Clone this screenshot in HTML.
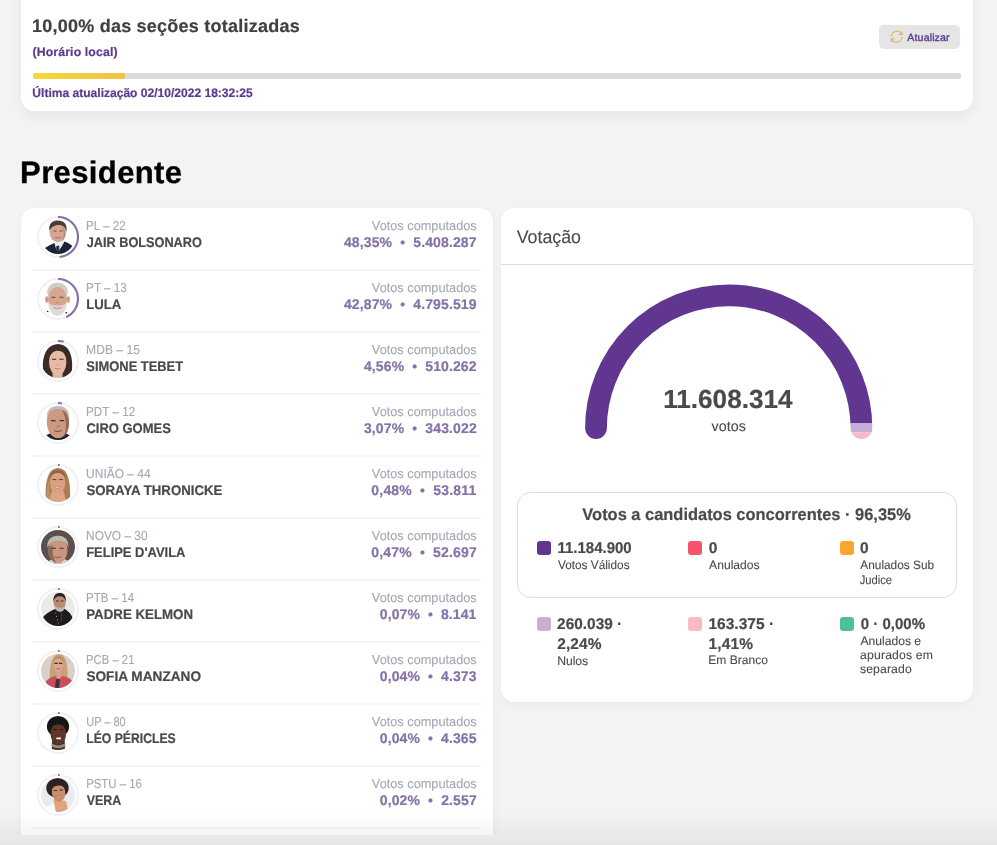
<!DOCTYPE html>
<html lang="pt-BR">
<head>
<meta charset="utf-8">
<title>Resultados - Presidente</title>
<style>
html,body{margin:0;padding:0}
body{width:997px;height:845px;overflow:hidden;background:#f3f3f3;font-family:"Liberation Sans",sans-serif;position:relative;color:#464646}
#wrap{position:absolute;left:0;top:0;width:997px;height:845px;will-change:transform}
.card{position:absolute;background:#fff;border-radius:14px;box-shadow:0 4px 11px rgba(0,0,0,.04)}
.t{position:absolute;left:0;top:0;white-space:nowrap;line-height:1;margin:0;font-weight:normal;transform-origin:0 0;text-rendering:geometricPrecision;-webkit-text-stroke-width:.1px}
.b{font-weight:bold;-webkit-text-stroke-width:.2px}
.pur{color:#5a3a8e}
.g{color:#a3a8b4}
.d{color:#4a4a4a}
.lp{color:#8472a8}
#top{left:21px;top:-30px;width:952px;height:140.7px;box-shadow:0 6px 14px rgba(0,0,0,.05)}
#bar{position:absolute;left:33px;top:73px;width:928px;height:5.8px;border-radius:2px;background:#dadada;overflow:hidden}
#bar i{display:block;width:92px;height:6px;border-radius:2px;background:linear-gradient(90deg,#f6d83a,#efc245)}
#btn{position:absolute;left:879px;top:25px;width:81px;height:23.5px;border-radius:5px;background:#e5e5e5}
#ico{position:absolute;left:890.2px;top:30.1px}
#list{left:21px;top:208px;width:472px;height:627px;border-radius:14px 14px 0 0;overflow:hidden}
.sep{position:absolute;left:33px;width:448px;height:2px;background:#f3f3f3}
.av{position:absolute;left:37.15px}
#vot{left:501.3px;top:208px;width:472px;height:493.6px}
#vs{position:absolute;left:501.3px;top:264px;width:472px;height:1px;background:#dedede}
#gauge{position:absolute;left:570px;top:270px}
#box{position:absolute;left:517px;top:492px;width:438px;height:104px;border:1px solid #dcdcdc;border-radius:14px;background:#fff}
.sq{position:absolute;width:14px;height:14px;border-radius:3px}
#fade{position:absolute;left:0;top:812px;width:997px;height:23px;background:linear-gradient(180deg,rgba(0,0,0,0),rgba(0,0,0,.04))}
#foot{position:absolute;left:0;top:835px;width:997px;height:10px;background:linear-gradient(180deg,#ebebeb,#e4e4e4)}
</style>
</head>
<body>
<div id="wrap">
<div class="card" id="top"></div>
<div id="h1" class="t b" style="font-size:18px;letter-spacing:0.238px;transform:translate(31.93px,16.86px);color:#404040">10,00% das seções totalizadas</div>
<div id="hl" class="t b pur" style="font-size:12.3px;letter-spacing:0.124px;transform:translate(32.46px,46.19px);">(Horário local)</div>
<div id="bar"><i></i></div>
<div id="ua" class="t b pur" style="font-size:12.3px;transform:translate(32.34px,86.59px) scaleX(0.9798);">Última atualização 02/10/2022 18:32:25</div>
<div id="btn"></div>
<svg id="ico" width="13.4" height="13.4" viewBox="0 0 13.4 13.4" fill="none" stroke="#e8a63a" stroke-width="1" stroke-linecap="round" stroke-linejoin="round"><path d="M1.15 6.1A5.6 5.6 0 0 1 11.7 4.2"/><path d="M12.25 7.3A5.6 5.6 0 0 1 1.7 9.2"/><path d="M12.1 1.7V4.5H9.3"/><path d="M1.3 11.7V8.9H4.1"/></svg>
<span id="bt" class="t pur" style="font-size:10.6px;letter-spacing:0.129px;transform:translate(907.34px,33.03px);-webkit-text-stroke:.35px #5a3a8e">Atualizar</span>
<h1 id="pres" class="t b" style="font-size:31.1px;letter-spacing:0.337px;transform:translate(20.06px,156.77px);color:#000;-webkit-text-stroke:.3px #000">Presidente</h1>
<div class="card" id="list"></div>
<svg class="av" style="top:215.85px" width="42" height="42" viewBox="0 0 42 42"><circle cx="21" cy="21" r="20.0" fill="#fff" stroke="#f1f0f4" stroke-width="2"/><circle cx="21" cy="21" r="20.0" fill="none" stroke="#8572aa" stroke-width="2.1" stroke-dasharray="60.76 125.66" transform="rotate(-90 21 21)"/><clipPath id="cp0"><circle cx="21" cy="21" r="17"/></clipPath><filter id="bl0" x="-10%" y="-10%" width="120%" height="120%"><feGaussianBlur stdDeviation=".45"/></filter><g clip-path="url(#cp0)"><rect width="42" height="42" fill="#ffffff"/><g filter="url(#bl0)"><path d="M17 27L23 24.5L28 25.5L21.5 39Z" fill="#e9edf4"/><path d="M19.3 30L22.2 29.6L22.8 39L18.8 39Z" fill="#23365d"/><path d="M6 33.5C9.5 30.5 14 28.6 17.5 27L20.3 38L27.6 25.4C31.5 27 35.2 29 36.8 31.6L38 42H5Z" fill="#1d2130"/><ellipse cx="20.8" cy="16" rx="8.3" ry="10.2" fill="#d6a594"/><path d="M24 9C29.5 12 30 22 24.5 26.2C27.5 21 27.5 14 24 9Z" fill="#a9796a" opacity=".55"/><path d="M12.4 14.5C11.3 6.5 16.5 4.1 21.5 4.4C27.2 4.7 30.8 8.6 29.4 16C28.8 12 27 9.8 24.2 9.2C20 8.3 15.5 9.2 12.4 14.5Z" fill="#4a3c37"/><path d="M16.5 15h3M22.5 15h3" stroke="#5a3d35" stroke-width=".9"/><path d="M17.8 21.3Q20.8 22.6 23.8 21.3" stroke="#9a5f55" stroke-width=".8" fill="none"/></g></g></svg>
<div id="p0" class="t g" style="font-size:13.0px;transform:translate(86.10px,219.00px) scaleX(0.8962);">PL – 22</div><div id="n0" class="t b d" style="font-size:13.9px;transform:translate(86.70px,236.23px) scaleX(0.9156);">JAIR BOLSONARO</div><div id="v0" class="t g" style="font-size:13.0px;transform:translate(371.83px,219.20px) scaleX(0.9808);">Votos computados</div><div id="c0" class="t b lp" style="font-size:14px;letter-spacing:0.126px;transform:translate(343.94px,234.95px);">48,35% &nbsp;•&nbsp; 5.408.287</div><div class="sep" style="top:268.7px"></div>
<svg class="av" style="top:277.85px" width="42" height="42" viewBox="0 0 42 42"><circle cx="21" cy="21" r="20.0" fill="#fff" stroke="#f1f0f4" stroke-width="2"/><circle cx="21" cy="21" r="20.0" fill="none" stroke="#8572aa" stroke-width="2.1" stroke-dasharray="53.87 125.66" transform="rotate(-90 21 21)"/><clipPath id="cp1"><circle cx="21" cy="21" r="17"/></clipPath><filter id="bl1" x="-10%" y="-10%" width="120%" height="120%"><feGaussianBlur stdDeviation=".45"/></filter><g clip-path="url(#cp1)"><rect width="42" height="42" fill="#ffffff"/><g filter="url(#bl1)"><ellipse cx="20.5" cy="13.6" rx="10.4" ry="9" fill="#cfcbc7"/><ellipse cx="9.9" cy="21.5" rx="1.7" ry="3.2" fill="#cf9b85"/><ellipse cx="31.2" cy="21.5" rx="1.7" ry="3.2" fill="#cf9b85"/><ellipse cx="20.5" cy="21.5" rx="9.4" ry="12.5" fill="#d7a68f"/><path d="M11.3 23.5C11.5 33 16 37.8 20.5 37.8C25 37.8 29.6 33 29.8 23.5C27.5 28 24.5 27.6 20.5 27.6C16.5 27.6 13.6 28 11.3 23.5Z" fill="#dedad7"/><path d="M16.8 29.6Q20.5 32.6 24.4 29.6Q20.5 30.6 16.8 29.6Z" fill="#fff" stroke="#9a6a5e" stroke-width=".5"/><path d="M14.5 19.3h4M22.5 19.3h4" stroke="#6b4a40" stroke-width="1"/><path d="M19 24.5Q20.5 25.6 22.2 24.5" stroke="#b57e6b" stroke-width=".8" fill="none"/><circle cx="10.6" cy="33.6" r=".9" fill="#23262b"/><circle cx="29.3" cy="34.8" r=".9" fill="#23262b"/></g></g></svg>
<div id="p1" class="t g" style="font-size:13.0px;transform:translate(86.09px,281.00px) scaleX(0.8991);">PT – 13</div><div id="n1" class="t b d" style="font-size:13.9px;transform:translate(86.25px,298.23px) scaleX(0.9473);">LULA</div><div id="v1" class="t g" style="font-size:13.0px;transform:translate(371.83px,281.20px) scaleX(0.9808);">Votos computados</div><div id="c1" class="t b lp" style="font-size:14px;letter-spacing:0.125px;transform:translate(343.94px,296.95px);">42,87% &nbsp;•&nbsp; 4.795.519</div><div class="sep" style="top:330.7px"></div>
<svg class="av" style="top:339.85px" width="42" height="42" viewBox="0 0 42 42"><circle cx="21" cy="21" r="20.0" fill="#fff" stroke="#f1f0f4" stroke-width="2"/><circle cx="21" cy="21" r="20.0" fill="none" stroke="#8572aa" stroke-width="2.1" stroke-dasharray="5.73 125.66" transform="rotate(-90 21 21)"/><clipPath id="cp2"><circle cx="21" cy="21" r="17"/></clipPath><filter id="bl2" x="-10%" y="-10%" width="120%" height="120%"><feGaussianBlur stdDeviation=".45"/></filter><g clip-path="url(#cp2)"><rect width="42" height="42" fill="#ffffff"/><g filter="url(#bl2)"><path d="M6.2 30C4.8 18 9 3.9 21 3.9C33 3.9 36.3 18 35 30C34.5 35 32.5 37.6 30 38H11C8.4 37.6 6.7 34.5 6.2 30Z" fill="#3a2b28"/><rect x="15.6" y="31" width="10" height="8" fill="#e2b4a0"/><ellipse cx="20.7" cy="22" rx="8.7" ry="13.3" fill="#e6baa6"/><path d="M11.8 19C11.5 9.5 17 7.3 21 7.6C26 7.2 30 10 29.7 19C28.4 13.6 25.2 10.8 21 10.8C17 10.8 13.4 13.4 11.8 19Z" fill="#3a2b28"/><path d="M15 19.3h4.2M22.4 19.3h4.2" stroke="#3b2622" stroke-width="1.1"/><path d="M18 28.4Q20.7 29.8 23.6 28.4" stroke="#c07a74" stroke-width="1" fill="none"/><path d="M19.6 24.6Q20.7 25.4 22 24.6" stroke="#c9927f" stroke-width=".7" fill="none"/></g></g></svg>
<div id="p2" class="t g" style="font-size:13.0px;transform:translate(86.12px,343.00px) scaleX(0.9295);">MDB – 15</div><div id="n2" class="t b d" style="font-size:13.9px;transform:translate(86.37px,360.23px) scaleX(0.9281);">SIMONE TEBET</div><div id="v2" class="t g" style="font-size:13.0px;transform:translate(371.83px,343.20px) scaleX(0.9808);">Votos computados</div><div id="c2" class="t b lp" style="font-size:14px;letter-spacing:0.114px;transform:translate(363.94px,358.95px);">4,56% &nbsp;•&nbsp; 510.262</div><div class="sep" style="top:392.7px"></div>
<svg class="av" style="top:401.85px" width="42" height="42" viewBox="0 0 42 42"><circle cx="21" cy="21" r="20.0" fill="#fff" stroke="#f1f0f4" stroke-width="2"/><circle cx="21" cy="21" r="20.0" fill="none" stroke="#8572aa" stroke-width="2.1" stroke-dasharray="3.86 125.66" transform="rotate(-90 21 21)"/><clipPath id="cp3"><circle cx="21" cy="21" r="17"/></clipPath><filter id="bl3" x="-10%" y="-10%" width="120%" height="120%"><feGaussianBlur stdDeviation=".45"/></filter><g clip-path="url(#cp3)"><rect width="42" height="42" fill="#ffffff"/><g filter="url(#bl3)"><path d="M8 42L9.2 33.2L15 30.6H27L33 33.6L34 42Z" fill="#1f222b"/><ellipse cx="21" cy="20" rx="11.2" ry="16.2" fill="#cc9983"/><path d="M25 8C34 11 34.5 29 26 36.2C30 28 30 16 25 8Z" fill="#7c4f42" opacity=".65"/><path d="M9.9 17C9 8 14 3.8 21 3.8C28 3.8 33 8 32.1 17C31.3 12.5 29.8 10 28 8.8C24 6.4 18 6.4 14 8.8C12.2 10 10.7 12.5 9.9 17Z" fill="#c3bdb8"/><path d="M14 18.6h4.6M22.6 18.6h4.6" stroke="#4a3029" stroke-width="1.1"/><path d="M17 28.8Q21 30.4 25 28.4" stroke="#7a4a40" stroke-width="1" fill="none"/><path d="M19.6 24Q21 25 22.8 24" stroke="#9a6656" stroke-width=".8" fill="none"/></g></g></svg>
<div id="p3" class="t g" style="font-size:13.0px;transform:translate(86.10px,405.00px) scaleX(0.8964);">PDT – 12</div><div id="n3" class="t b d" style="font-size:13.9px;transform:translate(86.43px,422.23px) scaleX(0.9342);">CIRO GOMES</div><div id="v3" class="t g" style="font-size:13.0px;transform:translate(371.83px,405.20px) scaleX(0.9808);">Votos computados</div><div id="c3" class="t b lp" style="font-size:14px;letter-spacing:0.124px;transform:translate(363.95px,420.95px);">3,07% &nbsp;•&nbsp; 343.022</div><div class="sep" style="top:454.7px"></div>
<svg class="av" style="top:463.85px" width="42" height="42" viewBox="0 0 42 42"><circle cx="21" cy="21" r="20.0" fill="#fff" stroke="#f1f0f4" stroke-width="2"/><circle cx="21" cy="21" r="20.0" fill="none" stroke="#8572aa" stroke-width="2.1" stroke-dasharray="1.70 125.66" transform="rotate(-90 21 21)"/><clipPath id="cp4"><circle cx="21" cy="21" r="17"/></clipPath><filter id="bl4" x="-10%" y="-10%" width="120%" height="120%"><feGaussianBlur stdDeviation=".45"/></filter><g clip-path="url(#cp4)"><rect width="42" height="42" fill="#ffffff"/><g filter="url(#bl4)"><path d="M8.8 38C7.8 24 9 3.9 21 3.9C33 3.9 33.8 24 32.8 38Z" fill="#a87d53"/><path d="M14.8 27H26.5L29.5 38.5H11.8Z" fill="#dca683"/><ellipse cx="20.6" cy="18.6" rx="7.7" ry="11" fill="#d9a180"/><path d="M12.9 15C12.6 7.2 17.8 5.8 21 6.2C25 5.8 28.8 8 28.4 15C27.2 10.8 24.2 9 21 9C17.5 9 14.4 10.6 12.9 15Z" fill="#8f6641"/><path d="M17.3 22.6Q20.6 25.8 24 22.6Q20.6 23.6 17.3 22.6Z" fill="#fff" stroke="#b06a5c" stroke-width=".5"/><path d="M15.4 15.6h3.8M22 15.6h3.8" stroke="#5a3a2a" stroke-width="1"/><path d="M9.5 37C9 28 10 20 12.5 16C12 24 12.5 31 14.5 37Z" fill="#c39a6c" opacity=".7"/></g></g></svg>
<div id="p4" class="t g" style="font-size:13.0px;transform:translate(86.10px,467.00px) scaleX(0.9214);">UNIÃO – 44</div><div id="n4" class="t b d" style="font-size:13.9px;transform:translate(86.40px,484.23px) scaleX(0.9521);">SORAYA THRONICKE</div><div id="v4" class="t g" style="font-size:13.0px;transform:translate(371.83px,467.20px) scaleX(0.9808);">Votos computados</div><div id="c4" class="t b lp" style="font-size:14px;letter-spacing:0.184px;transform:translate(371.35px,482.95px);">0,48% &nbsp;•&nbsp; 53.811</div><div class="sep" style="top:516.7px"></div>
<svg class="av" style="top:525.85px" width="42" height="42" viewBox="0 0 42 42"><circle cx="21" cy="21" r="20.0" fill="#fff" stroke="#f1f0f4" stroke-width="2"/><circle cx="21" cy="21" r="20.0" fill="none" stroke="#8572aa" stroke-width="2.1" stroke-dasharray="1.70 125.66" transform="rotate(-90 21 21)"/><clipPath id="cp5"><circle cx="21" cy="21" r="17"/></clipPath><filter id="bl5" x="-10%" y="-10%" width="120%" height="120%"><feGaussianBlur stdDeviation=".45"/></filter><g clip-path="url(#cp5)"><rect width="42" height="42" fill="#5b504e"/><g filter="url(#bl5)"><path d="M9 42L10.6 35.4L16 33H27L33.4 35.8L35 42Z" fill="#ced8e6"/><ellipse cx="20.8" cy="24" rx="9.7" ry="13.2" fill="#c9967e"/><path d="M11.4 21C10.8 29 14 35.5 19.5 37.2C15.6 31.5 15 25 16 19Z" fill="#6b463b" opacity=".6"/><path d="M10.4 22C9.3 13.4 15 9.5 21 9.7C27 9.5 32.4 13.4 31.2 22C30.2 17.4 28 14.6 21 14.6C15 14.6 11.8 17.4 10.4 22Z" fill="#bfb8af"/><path d="M15 22.3h4M22.6 22.3h4" stroke="#4a322b" stroke-width="1"/><path d="M17.6 31Q21 32.8 24.6 30.6" stroke="#8a5448" stroke-width=".9" fill="none"/></g></g></svg>
<div id="p5" class="t g" style="font-size:13.0px;transform:translate(86.08px,529.00px) scaleX(0.9143);">NOVO – 30</div><div id="n5" class="t b d" style="font-size:13.9px;transform:translate(86.16px,546.23px) scaleX(0.9327);">FELIPE D'AVILA</div><div id="v5" class="t g" style="font-size:13.0px;transform:translate(371.83px,529.20px) scaleX(0.9808);">Votos computados</div><div id="c5" class="t b lp" style="font-size:14px;letter-spacing:0.160px;transform:translate(371.35px,544.95px);">0,47% &nbsp;•&nbsp; 52.697</div><div class="sep" style="top:578.7px"></div>
<svg class="av" style="top:587.85px" width="42" height="42" viewBox="0 0 42 42"><circle cx="21" cy="21" r="20.0" fill="#fff" stroke="#f1f0f4" stroke-width="2"/><circle cx="21" cy="21" r="20.0" fill="none" stroke="#8572aa" stroke-width="2.1" stroke-dasharray="1.70 125.66" transform="rotate(-90 21 21)"/><clipPath id="cp6"><circle cx="21" cy="21" r="17"/></clipPath><filter id="bl6" x="-10%" y="-10%" width="120%" height="120%"><feGaussianBlur stdDeviation=".45"/></filter><g clip-path="url(#cp6)"><rect width="42" height="42" fill="#ece9e6"/><g filter="url(#bl6)"><path d="M3 42L4.8 30.5C8 26 13 23.6 17.2 21.2L28 21C31.5 23.6 34.4 26 35.8 30.5L38 42Z" fill="#1b1a1a"/><ellipse cx="22.6" cy="14" rx="6.1" ry="8.8" fill="#b68b75"/><path d="M16.4 14C15.8 6.4 20 4.9 22.6 5.1C26.2 4.9 29.4 7 28.8 14C28.2 10 26 8.2 22.6 8.2C19.6 8.2 17.4 9.8 16.4 14Z" fill="#292422"/><path d="M17.3 16.5C17.8 22.6 21 23.8 23 23.8C25.6 23.8 28.2 22.2 28.5 16.5C27.2 19.4 25 19.8 23 19.8C21 19.8 19 19.4 17.3 16.5Z" fill="#bcb6b1"/><path d="M19 13h2.6M23.8 13h2.6" stroke="#2e211d" stroke-width=".9"/><circle cx="18.6" cy="25" r=".6" fill="#a7986a"/><circle cx="19.5" cy="28.4" r=".6" fill="#a7986a"/><circle cx="20.4" cy="31.8" r=".6" fill="#a7986a"/><circle cx="21.2" cy="35" r=".6" fill="#a7986a"/><path d="M24.6 24.5L24.2 34" stroke="#6a6152" stroke-width=".6"/></g></g></svg>
<div id="p6" class="t g" style="font-size:13.0px;transform:translate(86.10px,591.00px) scaleX(0.8850);">PTB – 14</div><div id="n6" class="t b d" style="font-size:13.9px;transform:translate(86.23px,608.23px) scaleX(0.9565);">PADRE KELMON</div><div id="v6" class="t g" style="font-size:13.0px;transform:translate(371.83px,591.20px) scaleX(0.9808);">Votos computados</div><div id="c6" class="t b lp" style="font-size:14px;letter-spacing:0.094px;transform:translate(379.80px,606.95px);">0,07% &nbsp;•&nbsp; 8.141</div><div class="sep" style="top:640.7px"></div>
<svg class="av" style="top:649.85px" width="42" height="42" viewBox="0 0 42 42"><circle cx="21" cy="21" r="20.0" fill="#fff" stroke="#f1f0f4" stroke-width="2"/><circle cx="21" cy="21" r="20.0" fill="none" stroke="#8572aa" stroke-width="2.1" stroke-dasharray="1.70 125.66" transform="rotate(-90 21 21)"/><clipPath id="cp7"><circle cx="21" cy="21" r="17"/></clipPath><filter id="bl7" x="-10%" y="-10%" width="120%" height="120%"><feGaussianBlur stdDeviation=".45"/></filter><g clip-path="url(#cp7)"><rect width="42" height="42" fill="#d8d0c9"/><g filter="url(#bl7)"><path d="M13.2 30.5C11.6 20 14 3.9 22 3.9C30.2 3.9 31.4 20 30.2 30.5Z" fill="#c8a277"/><rect x="18.8" y="19" width="5.2" height="9" fill="#d5a189"/><path d="M7 42L9.2 31C12 28 16 26.6 19 26L21 30.5L25.2 26C29.2 26.6 33.2 28 35.2 31L37 42Z" fill="#c9505f"/><path d="M17.3 42L19 29.2L22.7 28.8L22.2 42Z" fill="#3b3537"/><ellipse cx="21.3" cy="14.6" rx="4.5" ry="7.5" fill="#dcaa93"/><path d="M16.4 13C16.5 7 19.5 6 21.6 6.2C24.5 6 26.6 8 26.2 13C25.4 9.6 23.6 8.6 21.4 8.6C19.2 8.6 17.4 9.8 16.4 13Z" fill="#b98f62"/><path d="M17.4 13.4h3.3M21.9 13.4h3.3" stroke="#3a2a2a" stroke-width="1.1"/><path d="M19.3 18.6Q21.3 19.8 23.4 18.6" stroke="#a9545a" stroke-width=".9" fill="none"/></g></g></svg>
<div id="p7" class="t g" style="font-size:13.0px;transform:translate(86.09px,653.00px) scaleX(0.8685);">PCB – 21</div><div id="n7" class="t b d" style="font-size:13.9px;transform:translate(86.41px,670.23px) scaleX(0.9812);">SOFIA MANZANO</div><div id="v7" class="t g" style="font-size:13.0px;transform:translate(371.83px,653.20px) scaleX(0.9808);">Votos computados</div><div id="c7" class="t b lp" style="font-size:14px;letter-spacing:0.110px;transform:translate(379.80px,668.95px);">0,04% &nbsp;•&nbsp; 4.373</div><div class="sep" style="top:702.7px"></div>
<svg class="av" style="top:711.85px" width="42" height="42" viewBox="0 0 42 42"><circle cx="21" cy="21" r="20.0" fill="#fff" stroke="#f1f0f4" stroke-width="2"/><circle cx="21" cy="21" r="20.0" fill="none" stroke="#8572aa" stroke-width="2.1" stroke-dasharray="1.70 125.66" transform="rotate(-90 21 21)"/><clipPath id="cp8"><circle cx="21" cy="21" r="17"/></clipPath><filter id="bl8" x="-10%" y="-10%" width="120%" height="120%"><feGaussianBlur stdDeviation=".45"/></filter><g clip-path="url(#cp8)"><rect width="42" height="42" fill="#ffffff"/><g filter="url(#bl8)"><ellipse cx="21" cy="14.6" rx="11.1" ry="10.6" fill="#161413"/><path d="M15.2 27H27.6L28.2 38.5H14.8Z" fill="#4a2a1e"/><ellipse cx="21.3" cy="21.4" rx="7.8" ry="11.2" fill="#5e3626"/><path d="M14.6 31.6Q21 35.2 28.2 31.6L28.3 34.4Q21 38 14.7 34.4Z" fill="#8f8c8c"/><rect x="19.3" y="25.6" width="4.8" height="1.7" rx=".85" fill="#fff"/><path d="M16.4 17.6h3.6M22.8 17.6h3.6" stroke="#1e120e" stroke-width="1"/><path d="M13.5 19C13.4 12.5 17 10 21.3 10C25.6 10 29.2 12.5 29.1 19C28 14.5 25.4 12.6 21.3 12.6C17.2 12.6 14.6 14.5 13.5 19Z" fill="#161413"/></g></g></svg>
<div id="p8" class="t g" style="font-size:13.0px;transform:translate(86.21px,715.00px) scaleX(0.8449);">UP – 80</div><div id="n8" class="t b d" style="font-size:13.9px;transform:translate(86.29px,732.23px) scaleX(0.8771);">LÉO PÉRICLES</div><div id="v8" class="t g" style="font-size:13.0px;transform:translate(371.83px,715.20px) scaleX(0.9808);">Votos computados</div><div id="c8" class="t b lp" style="font-size:14px;letter-spacing:0.106px;transform:translate(379.80px,730.95px);">0,04% &nbsp;•&nbsp; 4.365</div><div class="sep" style="top:764.7px"></div>
<svg class="av" style="top:773.85px" width="42" height="42" viewBox="0 0 42 42"><circle cx="21" cy="21" r="20.0" fill="#fff" stroke="#f1f0f4" stroke-width="2"/><circle cx="21" cy="21" r="20.0" fill="none" stroke="#8572aa" stroke-width="2.1" stroke-dasharray="1.70 125.66" transform="rotate(-90 21 21)"/><clipPath id="cp9"><circle cx="21" cy="21" r="17"/></clipPath><filter id="bl9" x="-10%" y="-10%" width="120%" height="120%"><feGaussianBlur stdDeviation=".45"/></filter><g clip-path="url(#cp9)"><rect width="42" height="42" fill="#e9ebef"/><g filter="url(#bl9)"><path d="M4 42L7.6 33.4L16.8 29.6L19.2 38.4L14 42Z" fill="#fbfbfb"/><path d="M16.4 25.6L29 27L31.2 36.2L24 39.6L19 38.4Z" fill="#e1a47f"/><ellipse cx="20.5" cy="14" rx="11.2" ry="10" fill="#2a2225"/><ellipse cx="21.6" cy="18.6" rx="6.8" ry="9.1" fill="#c98c6d" transform="rotate(-8 21.6 18.6)"/><path d="M14.2 16.5C13.6 10.5 17.5 8.4 21 8.6C24.8 8.4 28.6 10.4 28.6 15.5C27 12.4 24.6 11.4 21.2 11.6C17.8 11.8 15.6 13.4 14.2 16.5Z" fill="#2a2225"/><path d="M18.3 22.4Q21.8 25.4 25.2 21.6Q21.8 23.2 18.3 22.4Z" fill="#fff" stroke="#9a5548" stroke-width=".5"/><path d="M16.6 16.6h3.4M22.6 16h3.4" stroke="#3a2420" stroke-width=".9"/></g></g></svg>
<div id="p9" class="t g" style="font-size:13.0px;transform:translate(86.13px,777.00px) scaleX(0.8757);">PSTU – 16</div><div id="n9" class="t b d" style="font-size:13.9px;transform:translate(86.74px,794.23px) scaleX(0.8951);">VERA</div><div id="v9" class="t g" style="font-size:13.0px;transform:translate(371.83px,777.20px) scaleX(0.9808);">Votos computados</div><div id="c9" class="t b lp" style="font-size:14px;letter-spacing:0.121px;transform:translate(379.80px,792.95px);">0,02% &nbsp;•&nbsp; 2.557</div><div class="sep" style="top:826.7px"></div>
<div class="card" id="vot"></div>
<div id="vt" class="t d" style="font-size:18.3px;transform:translate(516.64px,227.61px) scaleX(0.9745);">Votação</div>
<div id="vs"></div>
<svg id="gauge" width="320" height="180" viewBox="0 0 320 180" fill="none" stroke-width="21.8" stroke-linecap="round">
<clipPath id="g1"><path d="M0 0H320V153.1H230V180H0Z"/></clipPath>
<clipPath id="g2"><rect x="230" y="153.1" width="90" height="9.5"/></clipPath>
<clipPath id="g3"><rect x="230" y="162.6" width="90" height="20"/></clipPath>
<path d="M26.0 158.0A132.7 132.7 0 0 1 291.4 158.0" stroke="#603690" clip-path="url(#g1)"/>
<path d="M26.0 158.0A132.7 132.7 0 0 1 291.4 158.0" stroke="#c4aed7" clip-path="url(#g2)"/>
<path d="M26.0 158.0A132.7 132.7 0 0 1 291.4 158.0" stroke="#fbb8c5" clip-path="url(#g3)"/>
</svg>
<div id="tot" class="t b d" style="font-size:26.2px;transform:translate(663.20px,386.42px) scaleX(0.9975);">11.608.314</div>
<div id="vts" class="t d" style="font-size:14.3px;letter-spacing:0.093px;transform:translate(711.46px,420.00px);">votos</div>
<div id="box"></div>
<div id="bh" class="t b d" style="font-size:16.8px;transform:translate(582.35px,506.88px) scaleX(0.9793);">Votos a candidatos concorrentes · 96,35%</div>
<div class="sq" style="left:537.1px;top:541.2px;background:#5f3591"></div><div class="sq" style="left:688.1px;top:541.2px;background:#f5526d"></div><div class="sq" style="left:840.2px;top:541.2px;background:#f9a532"></div><div class="sq" style="left:537.1px;top:617px;background:#c5afd8"></div><div class="sq" style="left:688.1px;top:617px;background:#f9b9c7"></div><div class="sq" style="left:840.2px;top:617px;background:#4cc09c"></div>
<div id="a1" class="t b d" style="font-size:15.5px;transform:translate(557.44px,540.98px) scaleX(0.9681);">11.184.900</div>
<div id="l1" class="t d" style="font-size:12.2px;transform:translate(557.91px,558.67px) scaleX(0.9701);">Votos Válidos</div>
<div id="a2" class="t b d" style="font-size:15.5px;transform:translate(708.65px,540.98px);">0</div>
<div id="l2" class="t d" style="font-size:12.2px;transform:translate(709.10px,559.27px) scaleX(0.9935);">Anulados</div>
<div id="a3" class="t b d" style="font-size:15.5px;transform:translate(860.03px,540.98px);">0</div>
<div id="l3" class="t d" style="font-size:12.2px;transform:translate(860.31px,559.27px) scaleX(0.9724);">Anulados Sub</div>
<div id="l3b" class="t d" style="font-size:12.2px;transform:translate(859.68px,574.07px) scaleX(0.9195);">Judice</div>
<div id="a4" class="t b d" style="font-size:15.5px;transform:translate(557.11px,616.98px) scaleX(0.9934);">260.039 ·</div>
<div id="a4b" class="t b d" style="font-size:15.5px;letter-spacing:0.113px;transform:translate(557.17px,636.78px);">2,24%</div>
<div id="l4" class="t d" style="font-size:12.2px;letter-spacing:-0.080px;transform:translate(557.32px,654.87px);">Nulos</div>
<div id="a5" class="t b d" style="font-size:15.5px;letter-spacing:0.028px;transform:translate(708.38px,616.98px);">163.375 ·</div>
<div id="a5b" class="t b d" style="font-size:15.5px;letter-spacing:0.199px;transform:translate(708.38px,636.78px);">1,41%</div>
<div id="l5" class="t d" style="font-size:12.2px;transform:translate(708.33px,653.87px) scaleX(0.9885);">Em Branco</div>
<div id="a6" class="t b d" style="font-size:15.5px;transform:translate(860.79px,616.98px) scaleX(0.9689);">0 · 0,00%</div>
<div id="l6" class="t d" style="font-size:12.2px;transform:translate(860.40px,634.67px) scaleX(0.9956);">Anulados e</div>
<div id="l6b" class="t d" style="font-size:12.2px;letter-spacing:0.178px;transform:translate(860.03px,649.07px);">apurados em</div>
<div id="l6c" class="t d" style="font-size:12.2px;letter-spacing:0.121px;transform:translate(860.00px,663.47px);">separado</div>
<div id="fade"></div><div id="foot"></div>
</div>
</body>
</html>
